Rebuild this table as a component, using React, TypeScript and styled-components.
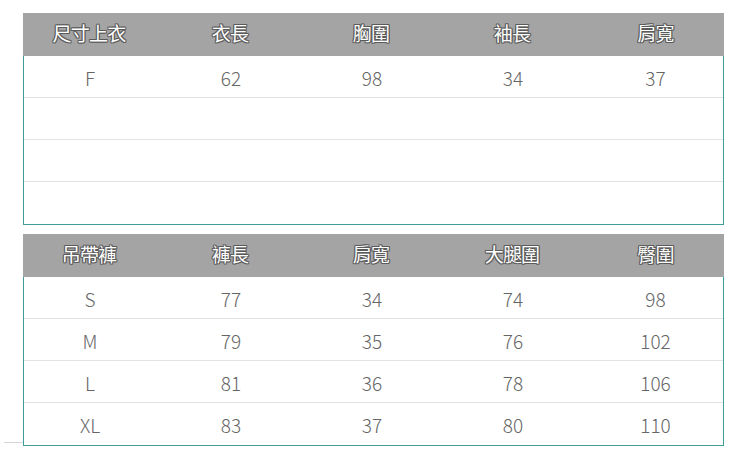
import React from "react";
import styled, { createGlobalStyle } from "styled-components";

const Global = createGlobalStyle`
  html, body { margin: 0; padding: 0; background: #ffffff; }
  body { font-family: "Noto Sans CJK TC", "Noto Sans", sans-serif; }
`;

const Page = styled.div`
  width: 750px;
  height: 470px;
  box-sizing: border-box;
  padding: 13px 0 0 23px;
  display: flex;
  flex-direction: column;
  gap: 9px;
`;

const Table = styled.div<{ $tail?: boolean }>`
  position: relative;
  width: 701px;
  &::after {
    content: "";
    display: ${(p) => (p.$tail ? "block" : "none")};
    position: absolute;
    left: -19px;
    bottom: 3px;
    width: 19px;
    height: 1px;
    background: #d8d8d8;
  }
`;

const cols = "132px 150px 132px 150px 1fr";

const HeaderRow = styled.div`
  display: grid;
  grid-template-columns: ${cols};
  height: 43px;
  background: #a4a4a4;
`;

const HeadCell = styled.div`
  display: flex;
  align-items: center;
  justify-content: center;
  padding-bottom: 5px;
  color: #ffffff;
  font-size: 19px;
  font-weight: 400;
  letter-spacing: -0.8px;
  text-shadow: -1px 0 #5a5a5a, 1px 0 #5a5a5a, 0 -1px #5a5a5a, 0 1px #5a5a5a,
    -1px -1px #666666, 1px 1px #666666, -1px 1px #666666, 1px -1px #666666;
`;

const Body = styled.div`
  border: 1px solid #3e9d99;
  border-top: none;
`;

const Row = styled.div`
  display: grid;
  grid-template-columns: ${cols};
  height: 41px;
  border-bottom: 1px solid #e2e2e2;
  &:last-child {
    border-bottom: none;
    height: 42px;
  }
`;

const Cell = styled.div`
  display: flex;
  align-items: center;
  justify-content: center;
  padding-top: 1px;
  color: #666666;
  font-size: 19px;
  font-weight: 300;
  font-family: "Noto Sans CJK TC", "Noto Sans", sans-serif;
`;

type TableProps = { heads: string[]; rows: string[][]; tail?: boolean };

function SizeTable({ heads, rows, tail }: TableProps) {
  return (
    <Table $tail={tail}>
      <HeaderRow>
        {heads.map((h) => (
          <HeadCell key={h}>{h}</HeadCell>
        ))}
      </HeaderRow>
      <Body>
        {rows.map((r, i) => (
          <Row key={i}>
            {r.map((c, j) => (
              <Cell key={j}>{c}</Cell>
            ))}
          </Row>
        ))}
      </Body>
    </Table>
  );
}

export default function App() {
  return (
    <>
      <Global />
      <Page>
        <SizeTable
          heads={["尺寸上衣", "衣長", "胸圍", "袖長", "肩寬"]}
          rows={[
            ["F", "62", "98", "34", "37"],
            ["", "", "", "", ""],
            ["", "", "", "", ""],
            ["", "", "", "", ""],
          ]}
        />
        <SizeTable
          tail
          heads={["吊帶褲", "褲長", "肩寬", "大腿圍", "臀圍"]}
          rows={[
            ["S", "77", "34", "74", "98"],
            ["M", "79", "35", "76", "102"],
            ["L", "81", "36", "78", "106"],
            ["XL", "83", "37", "80", "110"],
          ]}
        />
      </Page>
    </>
  );
}
